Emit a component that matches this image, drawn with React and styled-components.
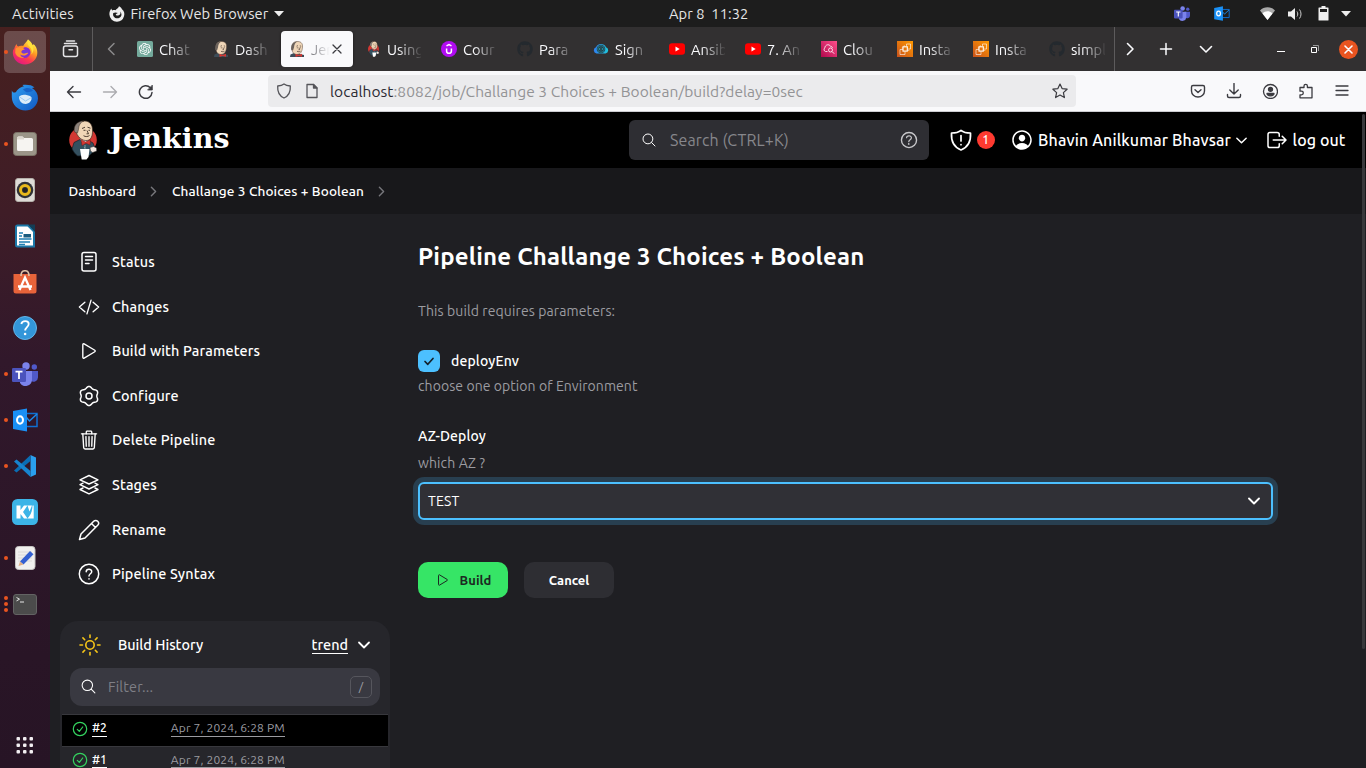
import React from 'react';
import styled, { createGlobalStyle, css } from 'styled-components';
import {
  IoSearchOutline, IoChevronForwardOutline, IoTrashOutline,
  IoHelpCircleOutline, IoPersonCircleOutline, IoPlayOutline, IoLogOutOutline, IoCodeSlashOutline,
} from 'react-icons/io5';
import { FaGithub } from 'react-icons/fa';
import { SiOpenai } from 'react-icons/si';

const Global = createGlobalStyle`
  *, *::before, *::after { box-sizing: border-box; }
  html, body { margin: 0; background: #1f1f23; overflow: hidden; }
  body { font-family: Ubuntu, "Noto Sans", "Open Sans", sans-serif; font-size: 14px; color: #fff; }
  svg { display: block; flex: none; }
`;

/* ---------- text ---------- */
const T = styled.span`
  white-space: pre;
  display: inline-block;
  font-size: ${p => p.$size || 14}px;
  font-weight: ${p => p.$weight || 400};
  color: ${p => p.$color || 'inherit'};
  letter-spacing: ${p => p.$track || 0}px;
  line-height: 20px;
`;

/* ---------- shell ---------- */
const Screen = styled.div`
  width: 1366px; height: 768px; overflow: hidden;
  display: flex; flex-direction: column;
`;
const TopBar = styled.header`
  height: 27px; flex: none; background: #1d1d1d; color: #e6e6e6;
  display: grid; grid-template-columns: 669px auto 1fr; align-items: center;
`;
const TopLeft = styled.div`display: flex; align-items: center; padding-left: 12px; height: 27px;`;
const TopApp = styled.div`display: flex; align-items: center; margin-left: 35px; gap: 5.500px;`;
const TopRight = styled.div`display: flex; align-items: center; justify-content: flex-end; padding-right: 15px;`;
const Gap = styled.span`width: ${p => p.$w}px; flex: none;`;
const Desktop = styled.div`display: flex; flex: 1; min-height: 0;`;
const Dock = styled.nav`
  width: 50px; flex: none; display: flex; flex-direction: column; align-items: center;
  padding-top: 2px;
  background: linear-gradient(180deg, #47201f 0%, #3f1d27 25%, #31182b 45%, #291526 85%, #271425 100%);
`;
const DockItem = styled.div`
  width: 50px; height: 46px; flex: none; position: relative;
  display: flex; align-items: center; justify-content: center;
  & > svg { position: relative; }
  ${p => p.$active && css`
    &::before { content: ''; position: absolute; inset: 2px 4px; border-radius: 5px; background: rgba(255,255,255,0.2); }
  `}
`;
const Dots = styled.span`
  position: absolute; left: 4px; top: 0; height: 46px; width: 4px;
  display: flex; flex-direction: column; justify-content: center; gap: 2px;
  i { width: 4px; height: 4px; border-radius: 2px; background: #e95420; }
`;
const DockApps = styled.div`margin-top: auto; padding-bottom: 14px;`;
const Browser = styled.main`flex: 1; min-width: 0; display: flex; flex-direction: column;`;

/* ---------- tab strip ---------- */
const TabStrip = styled.div`height: 44px; flex: none; background: #323031; display: flex; align-items: center; color: #fbfbfe;`;
const StripCell = styled.div`
  width: ${p => p.$w}px; height: 44px; flex: none; display: flex; align-items: center; justify-content: center;
  border-right: ${p => (p.$rule ? '1px solid #5d5b5c' : 'none')};
`;
const Tabs = styled.div`display: flex; gap: 4px; width: 985px; overflow: hidden; flex: none;`;
const Tab = styled.div`
  width: 72px; height: 36px; padding: 0 8px; border-radius: 4px; flex: none;
  display: flex; align-items: center;
  ${p => p.$active && css`background: #f9f9fb; color: #77777c; box-shadow: 0 0 3px rgba(0,0,0,.5);`}
`;
const TabText = styled.div`
  margin-left: 6px; width: ${p => (p.$active ? 19 : 34)}px; flex: none; padding: 1px 0 0 0; white-space: nowrap; overflow: hidden;
  mask-image: linear-gradient(90deg, #000 ${p => (p.$active ? 0 : 30)}%, transparent ${p => (p.$active ? 100 : 105)}%);
`;
const WindowBtns = styled.div`display: flex; align-items: center; margin-left: auto; padding-right: 8.500px;`;
const Close = styled.span`
  width: 19px; height: 19px; border-radius: 50%; background: #e95420; margin-left: 20px;
  display: flex; align-items: center; justify-content: center;
`;

/* ---------- address bar ---------- */
const NavBar = styled.div`
  height: 41px; flex: none; background: #f9f9fb; border-bottom: 1px solid #ccccd0; color: #3b3b40;
  display: flex; align-items: center; padding: 0 14px 0 16px;
`;
const UrlBar = styled.div`
  width: 808px; height: 32px; border-radius: 4px; background: #ebebed;
  display: flex; align-items: center; padding: 0 8px; color: #939395; flex: none;
  b { font-weight: 400; color: #2b2a33; }
  & > ${T} { padding-top: 2px; }
`;
const NavLeft = styled.div`display: flex; width: 202px; gap: 20px; align-items: center; padding-top: 1px; flex: none;`;
const NavTools = styled.div`display: flex; align-items: center; gap: 20px; margin-left: auto; padding-right: 2px;`;
const Push = styled.span`margin-left: auto;`;

/* ---------- jenkins ---------- */
const Page = styled.div`flex: 1; min-height: 0; background: #1f1f23; position: relative; overflow: hidden;`;
const Scrollbar = styled.i`position: absolute; right: 1px; top: 2px; width: 3px; height: 535px; border-radius: 2px; background: #38383b;`;
const Header = styled.div`height: 56px; background: #000; display: flex; align-items: center; padding: 0 20px 0 19px;`;
const Brand = styled.div`display: flex; align-items: center; gap: 12.500px; font-family: Georgia, "DejaVu Serif", serif; & > span { margin-top: -5px; }`;
const Search = styled.div`
  width: 300px; height: 40px; border-radius: 6px; background: #2e2e33; margin-left: auto;
  display: flex; align-items: center; padding: 0 9px 0 12px;
`;
const Alert = styled.div`display: flex; align-items: center; gap: 4px; margin-left: 20px;`;
const Badge = styled.span`
  width: 18px; height: 18px; border-radius: 9px; background: #fe3a30; font-size: 12px; font-weight: 500; line-height: 18px; text-align: center;
`;
const HeaderLink = styled.div`display: flex; align-items: center; margin-left: ${p => p.$ml}px;`;
const Crumbs = styled.div`height: 46px; background: #18181b; display: flex; align-items: center; padding-left: 18.500px;`;
const Columns = styled.div`display: flex;`;
const Side = styled.aside`width: 340px; flex: none; padding: 25.800px 0 0 10px;`;
const Task = styled.div`height: 44.6px; display: flex; align-items: center; gap: 12px; padding-left: 18px; & > svg { width: 22px; height: 22px; }`;
const History = styled.section`margin-top: 24.200px; width: 330px; height: 190px; border-radius: 18px; background: #26262b; padding: 1px 2px;`;
const HistoryHead = styled.div`height: 46px; display: flex; align-items: center; padding: 1px 17px 0 17px;`;
const Filter = styled.div`
  margin: 0 8px 8px; height: 38px; border-radius: 12px; background: #393941; display: flex; align-items: center; padding: 0 8px 0 10px;
  & > ${T} { padding-top: 1px; }
`;
const Key = styled.span`
  width: 22px; height: 22px; border: 1px solid #56565d; border-radius: 5px; margin-left: auto;
  font-size: 12px; line-height: 19px; text-align: center; color: #a0a0a6;
`;
const BuildRow = styled.div`
  height: ${p => (p.$first ? 32 : 31)}px; border-top: 1px solid #38383d; background: ${p => (p.$first ? '#000' : 'transparent')};
  display: flex; align-items: center; padding: 0 0 3px 10px;
`;
const Under = styled.span`border-bottom: 1px solid currentColor; color: ${p => p.$color || '#fff'}; height: ${p => p.$h || 17}px; display: inline-flex; align-items: center;`;
const Content = styled.section`padding: 27px 0 0 28px; width: 883px; display: flex; flex-direction: column; align-items: flex-start;`;
const Title = styled.h1`margin: 0; height: 32px; line-height: 32px; font-size: 24px; display: flex; align-items: center;`;
const Line = styled.div`height: 20px; margin-top: ${p => p.$mt}px; display: flex; align-items: center; gap: 11px;`;
const Check = styled.span`width: 22px; height: 22px; border-radius: 6px; background: #4cc0ff; display: flex; align-items: center; justify-content: center;`;
const Select = styled.div`
  width: 855px; height: 38px; margin-top: 9px; border: 2px solid #4cc0ff; border-radius: 6px; background: #303036;
  box-shadow: 0 0 0 5px #283f50; display: flex; align-items: center; justify-content: space-between; padding: 0 10px 0 8px;
`;
const Buttons = styled.div`display: flex; gap: 16px; margin-top: 42px;`;
const Button = styled.div`
  width: 90px; height: 36px; border-radius: 10px; display: flex; align-items: center; justify-content: center; gap: 9px;
  background: ${p => (p.$primary ? '#36e566' : '#2e2e33')}; color: ${p => (p.$primary ? '#1c2a22' : '#fff')};
`;

/* ---------- drawings ---------- */
const S = ({ s = 16, vb = 16, w = 1.3, children, ...p }) => (
  <svg width={s} height={s} viewBox={`0 0 ${vb} ${vb}`} fill="none" stroke="currentColor" strokeWidth={w} strokeLinecap="round" strokeLinejoin="round" {...p}>{children}</svg>
);
const Down = ({ s = 14, w = 1.6 }) => <S s={s} vb={14} w={w}><path d="M2 4.500l5 5 5-5" /></S>;
const Head = () => (
  <svg width="16" height="16" viewBox="0 0 16 16">
    <path d="M1 16l.5-2.500L5 12l6 1 4 1v2z" fill="#3c4c58" />
    <path d="M3 5.500C3 2 5.500.3 9 .5s4.800 2.500 4.500 5.500-.8 6.500-4.500 7.300S3.500 11.500 3 9z" fill="#efd6b8" stroke="#5b4638" strokeWidth=".5" />
    <path d="M2.300 9C1.500 4 3.800.4 8.500.4 6 1.500 5.300 3.500 5 6.500L4 9.500z" fill="#6b625c" />
    <path d="M7.500 5.200l1.500-.5M10.800 4.900l1.400.3M7.800 6.800h1M11 6.800h.8M10 6.500l.6 2.200H9.500M8 10.300c1.500.6 2.500.5 3.500 0" stroke="#4a3a30" strokeWidth=".7" fill="none" />
    <path d="M6.500 12.800l3 1.200 3.500-1.200v3L9.500 15l-3 1z" fill="#d33833" />
  </svg>
);
const Butler = ({ w = 28, h = 40 }) => (
  <svg width={w} height={h} viewBox="0 0 28 40">
    <ellipse cx="14" cy="20" rx="13.800" ry="13" fill="#d33833" />
    <path d="M5 22.500l6-3 8 .5 5 3 2.500 6.500-3 3-3 3-12 .5-3-3-2.500-4z" fill="#34505f" stroke="#172026" strokeWidth=".7" />
    <path d="M10.500 17.500l4 7 5-4-1-3z" fill="#f4f4f4" />
    <path d="M6.500 10C6 4 11 .8 16 1c5 .3 7.500 4 7.500 9 .3 6-1.500 10-5.500 10.500C13 21 8 17 6.500 10z" fill="#f0d6b7" stroke="#3b2c22" strokeWidth=".7" />
    <path d="M5.500 12C4 6 8 .9 15 1 11 2.500 10 5 9.500 9.500L8.500 13z" fill="#8a817b" stroke="#3b2c22" strokeWidth=".5" />
    <path d="M13 8.500l3-1.300M18.500 7.200l3 1M14.500 10.300h2M19.500 10.300h1.500M18 10.500l1.500 3.300h-2M14.500 15.700c2 1.300 4.500 1 6-.2" stroke="#3b2c22" strokeWidth=".9" fill="none" />
    <path d="M12 19.500l4.500 2.400 5-2.200-.5 5.300-4-1.800-4 2.300z" fill="#d33833" stroke="#7b1714" strokeWidth=".5" />
    <path d="M16 25v4M15 27.500h.8" stroke="#9aa" strokeWidth=".8" />
    <path d="M11 29h9.500L19.500 37l-2 2.500h-4.800z" fill="#fff" />
    <path d="M21 27.500l3.500-1 3 1.500.2 3-4 1.500-2.200-1.500z" fill="#f3e7e0" stroke="#333" strokeWidth=".5" />
  </svg>
);
const TinyButler = () => <Butler w={13} h={16} />;
const Gpt = () => (
  <svg width="16" height="16" viewBox="0 0 16 16"><rect width="16" height="16" rx="1.500" fill="#74aa9c" /><g transform="translate(2 2)"><SiOpenai size={12} color="#fff" /></g></svg>
);
const Udemy = () => (
  <svg width="16" height="16" viewBox="0 0 16 16"><circle cx="8" cy="8" r="8" fill="#b10cf2" /><path d="M5.600 7.500v2.400a2.400 2.400 0 004.800 0V7.500M5.500 4.900L8 3.500l2.500 1.400" stroke="#fff" strokeWidth="1.500" fill="none" /></svg>
);
const CloudCode = () => (
  <svg width="16" height="16" viewBox="0 0 16 16">
    <defs><linearGradient id="cc"><stop stopColor="#2f7df0" /><stop offset="1" stopColor="#1fc8dc" /></linearGradient></defs>
    <path d="M3.500 12.500A3.200 3.200 0 013 6.300C4 3.800 6 3 8 3s4.200 1 5 3.300a3.200 3.200 0 01-.5 6.200z" fill="url(#cc)" />
    <circle cx="8" cy="8" r="4.300" fill="#263f49" /><circle cx="8" cy="8" r="3.300" fill="none" stroke="#1a8ba0" strokeWidth=".8" /><path d="M7.300 6.800L6.200 8l1.100 1.200M8.700 6.800L9.800 8 8.700 9.200" stroke="#1fb5c8" strokeWidth=".8" fill="none" />
  </svg>
);
const Tube = () => (
  <svg width="16" height="16" viewBox="0 0 16 16"><rect y="2.300" width="16" height="11.500" rx="3" fill="#f00" /><path d="M6.500 5.600v5L10.700 8z" fill="#fff" /></svg>
);
const CloudWatch = () => (
  <svg width="16" height="16" viewBox="0 0 16 16">
    <defs><linearGradient id="cw" y1="1" x2="1" y2="0"><stop stopColor="#b0084d" /><stop offset="1" stopColor="#ff4f8b" /></linearGradient></defs>
    <rect width="16" height="16" fill="url(#cw)" /><path d="M6.500 10.500H4.500A2 2 0 013.800 7c.2-3.300 4.200-4.500 5.700-1.700 1.200 0 1.800.7 2 1.700" stroke="#fff" strokeWidth=".8" fill="none" /><circle cx="9.500" cy="9" r="2" stroke="#fff" strokeWidth=".8" fill="none" /><path d="M11 10.500l2.200 2.200" stroke="#fff" strokeWidth=".9" />
  </svg>
);
const Ec2 = () => (
  <svg width="16" height="16" viewBox="0 0 16 16">
    <defs><linearGradient id="ec" y1="1" x2="1" y2="0"><stop stopColor="#c8511b" /><stop offset="1" stopColor="#f90" /></linearGradient></defs>
    <rect width="16" height="16" fill="url(#ec)" /><g stroke="#fff" strokeWidth=".6" fill="none"><rect x="6" y="5.800" width="4.300" height="4.300" strokeWidth="1.100" /><path d="M8 10.500v3H3v-5h3M9.500 5V3h4v5h-2.300M7.300 5.500V4.300M4.800 7H6M11 9.300h1.300" /></g>
  </svg>
);
const GitHub = () => <FaGithub size={16} color="#24292e" />;

const icons = {
  firefox: (
    <svg width="26" height="26" viewBox="0 0 26 26">
      <defs>
        <linearGradient id="ff1" x1=".8" y1=".1" x2=".25" y2=".95"><stop stopColor="#fff14a" /><stop offset=".35" stopColor="#ff9a22" /><stop offset=".65" stopColor="#ff3c4e" /><stop offset="1" stopColor="#e31a80" /></linearGradient>
        <radialGradient id="ff2"><stop stopColor="#6b3fd8" /><stop offset="1" stopColor="#8a2ccb" /></radialGradient>
      </defs>
      <path d="M16 .5c3 2 4 4 4.500 5.500l1.200-.8c3 2.500 4.300 7 3.300 11.300C23.500 22 18.500 25.500 13 25.500 6 25.500.8 20 .8 13.500c0-1.500.4-2.700 1-3.700l.2 1.200c.3-2.500 1.300-4.500 2.700-6 .1 1.500.5 2 1.400 2.500 1.500-.8 3.500-1 5-.5C12.500 4 14.500 3.500 16 .5z" fill="url(#ff1)" />
      <path d="M12 8.500c3.500-.8 6.500 1.500 6.500 5a6 6 0 01-6 5.500c-3 0-5-2-5.500-4.500z" fill="url(#ff2)" />
      <path d="M3.500 9.500c3-2 6.500-1.200 9.500.8-1.500.7-3 .8-3.500 2-.5 1 .5 2 1.700 2.300 2 .4 3-1.200 5-.6-1.200 2.500-5.500 3.500-8 1.500.5 1.800 2 3 4 3.200-4 1-8-1.500-9-5z" fill="#ff9430" />
      <path d="M16 .5c-1 3.500-.5 5.500 1.500 7 2.300 2 2.800 5 1.800 8 3.200-3.500 2.700-7.500.2-10.500z" fill="#ffe23a" />
    </svg>
  ),
  bird: (
    <svg width="28" height="28" viewBox="0 0 28 28">
      <defs><linearGradient id="tb" x2="1" y2="1"><stop stopColor="#2fa0f2" /><stop offset="1" stopColor="#1157c2" /></linearGradient></defs>
      <path d="M.8 6.500c1.200 2.500 2.700 2.500 4.200 1.500C7.500 4 11 2.500 13 2.500L11.500 1C16 .5 21 1 23.500 3.500l-2.500.5C25 6.500 27 10 27 14.500 26.500 22 21 26.500 14.500 26.500 7 26.500 1 21 .8 13z" fill="url(#tb)" />
      <path d="M8 13c1.500-2 4-2.700 6.500-2.200s5.500 1 6 3.200-2 6-6 6-6.300-3-6.500-7z" fill="#dcecf9" /><path d="M8 12.500l6.500 4.500 6-3.500" stroke="#9dcbf1" fill="none" />
      <path d="M12 5.500c3-2.300 8-2 10 1-2 1.500-5 2-7 1.500" fill="#1663c8" />
    </svg>
  ),
  files: (
    <svg width="24" height="24" viewBox="0 0 24 24"><rect x=".5" y=".5" width="23" height="23" rx="3" fill="#9b9588" stroke="#7c7568" /><path d="M4 6q0-1.500 1.500-1.500h4L11 6h7.500Q20 6 20 7.500v10q0 1.500-1.500 1.500h-13Q4 19 4 17.500z" fill="#f6f4f1" /><path d="M4 6q0-1.500 1.500-1.500h4L11 6v1.500H4z" fill="#ddd8cf" /></svg>
  ),
  music: (
    <svg width="22" height="24" viewBox="0 0 22 24"><rect x="1.500" y=".5" width="19" height="23" rx="2.500" fill="#dedbd6" stroke="#b4b0aa" /><circle cx="11" cy="12" r="8.300" fill="#303236" /><circle cx="11" cy="12" r="4.500" fill="none" stroke="#e9b91c" strokeWidth="3" /><circle cx="11" cy="12" r="2.300" fill="#222" /></svg>
  ),
  writer: (
    <svg width="22" height="24" viewBox="0 0 22 24"><path d="M3.500 1.500h10.500L20 7.500v15H3.500q-1.500 0-1.500-1.500V3Q2 1.500 3.500 1.500z" fill="#fff" stroke="#1b78a8" strokeWidth="2" /><path d="M14 .5h7v7.500z" fill="#143d55" /><path d="M5 9h4M5 12h3M5 15h12.500M5 18h11M5 20.500h6" stroke="#1f7fb2" strokeWidth="1.300" /><rect x="9.500" y="10" width="7.500" height="3.500" fill="#1b5d80" /></svg>
  ),
  store: (
    <svg width="24" height="24" viewBox="0 0 24 24"><path d="M.5 4h23v17q0 2.500-2.500 2.500H3Q.5 23.500.5 21z" fill="#e8633a" /><path d="M8 6c0-7 8-7 8 0" stroke="#dcc0a6" strokeWidth="1.600" fill="none" /><path d="M6.500 20L12 7.500 17.500 20M5 16.500h14" stroke="#fff" strokeWidth="2.300" fill="none" /></svg>
  ),
  help: (
    <svg width="24" height="24" viewBox="0 0 24 24"><circle cx="12" cy="12" r="11.500" fill="#3396d9" stroke="#62b4e8" /><path d="M8.300 8c.7-3.800 7.400-3.800 7.400 0 0 3-3.500 3.200-3.500 6.500" stroke="#fff" strokeWidth="1.800" fill="none" /><circle cx="12.100" cy="18" r="1.300" fill="#fff" /></svg>
  ),
  teams: (
    <svg width="26" height="24" viewBox="0 0 26 24"><circle cx="14" cy="4" r="3.700" fill="#7b83eb" /><circle cx="22.300" cy="5" r="2.700" fill="#5059c9" /><path d="M17 9h9v6.500a4.500 4.500 0 01-7 3.500z" fill="#5059c9" /><path d="M8 9h12v9a6.500 6.500 0 01-12 3z" fill="#7b83eb" /><rect y="6" width="14" height="14" rx="1.300" fill="#4b53bc" /><path d="M3.500 9.600h7M7 9.600V17" stroke="#fff" strokeWidth="1.800" /></svg>
  ),
  outlook: (
    <svg width="25" height="24" viewBox="0 0 25 24"><path d="M13 5.500h11v13H13" fill="none" stroke="#0f6fd1" strokeWidth="1.500" /><path d="M13.500 9.500l3 3.500L24 6" stroke="#1b8bea" strokeWidth="1.500" fill="none" /><path d="M0 3L14 .5v23L0 21z" fill="#1a90f5" /><ellipse cx="7" cy="12" rx="3" ry="3.700" fill="none" stroke="#fff" strokeWidth="2" /></svg>
  ),
  code: (
    <svg width="24" height="24" viewBox="0 0 24 24"><path d="M17.500 1L23 3.500v17L17.500 23z" fill="#2a9fef" /><path d="M17.500 1v6L3.500 18.500 1 16.500z" fill="#0a6db4" /><path d="M17.500 23v-6L3.500 5.500 1 7.500z" fill="#1784cf" /></svg>
  ),
  kiro: (
    <svg width="26" height="26" viewBox="0 0 26 26"><rect width="26" height="26" rx="5.500" fill="#3cb4e7" /><path d="M4.500 6.500h4v4.500l3.500-4.500h3.500l-4.500 6.500 4.500 6.500H12l-3.500-4.500v4.500h-4zM15.500 6.500H20l-2.500 6zM20.500 6.500h1.200v13H15.500c3-3.500 4.800-6.500 5-13z" fill="#fff" /></svg>
  ),
  editor: (
    <svg width="22" height="24" viewBox="0 0 22 24"><rect x="1.500" y=".5" width="19.500" height="23" rx="3" fill="#f1f0ee" stroke="#c6c4c2" /><path d="M4 6h14M4 9h14M4 12h14M4 15h14" stroke="#dcdad8" /><path d="M6 15.500L16 5l3.500 3.200L9.500 18.500z" fill="#3460d0" /><path d="M6 15.500l3.500 3L4.500 20z" fill="#e0b087" /></svg>
  ),
  terminal: (
    <svg width="24" height="21" viewBox="0 0 24 21"><rect x=".5" y=".5" width="23" height="20" rx="2.500" fill="#4b4b4b" stroke="#636363" /><path d="M3.500 3.500l3 1.700-3 1.700M7 8h4" stroke="#e8e8e8" strokeWidth="1" fill="none" /></svg>
  ),
};
const dock = [['firefox', 1], ['bird', 0], ['files', 1], ['music', 0], ['writer', 0], ['store', 0], ['help', 0], ['teams', 1], ['outlook', 1], ['code', 1], ['kiro', 0], ['editor', 1], ['terminal', 3]];

const tabs = [
  [Gpt, 'Chat'], [Head, 'Dash'], [Head, 'Jen', true], [TinyButler, 'Using'], [Udemy, 'Cour'], [GitHub, 'Para'],
  [CloudCode, 'Sign'], [Tube, 'Ansib'], [Tube, '7. An'], [CloudWatch, 'Clou'], [Ec2, 'Insta'], [Ec2, 'Insta'], [GitHub, 'simpl'],
];

const gearPath = Array.from({ length: 73 }, (_, i) => {
  const a = (i / 72) * Math.PI * 2;
  const r = 8.700 + 0.900 * Math.cos(6 * a + Math.PI);
  return `${i ? 'L' : 'M'}${(11 + r * Math.cos(a)).toFixed(2)} ${(11 + r * Math.sin(a)).toFixed(2)}`;
}).join('') + 'Z';

const tasks = [
  ['Status', 0.15, <S vb={22} w={1.5}><rect x="4" y="1.500" width="14" height="18.500" rx="2" /><path d="M7.500 5.500h7M7.500 9h7M7.500 12.500h3.500" /></S>],
  ['Changes', 0.14, <IoCodeSlashOutline />],
  ['Build with Parameters', 0.12, <IoPlayOutline />],
  ['Configure', 0.08, <S vb={22} w={1.5}><path d={gearPath} /><circle cx="11" cy="11" r="3" /></S>],
  ['Delete Pipeline', 0.16, <IoTrashOutline />],
  ['Stages', 0.14, <S vb={22} w={1.4}><path d="M11 1.500l9 4.300-9 4.200-9-4.200zM5 9.200l-3 1.500L11 15l9-4.300-3-1.500M5 14l-3 1.500 9 4.300 9-4.300-3-1.500" /></S>],
  ['Rename', 0.1, <S vb={22} w={1.5}><path d="M1.500 20.500l1.500-5.500L15.700 2.300a2.700 2.700 0 014 4L7 19zM13.500 4.500l4 4" /></S>],
  ['Pipeline Syntax', 0.16, <S vb={22} w={1.500}><circle cx="11" cy="11" r="9.700" /><path d="M8.200 8.800C8.300 5.300 13.800 5.500 13.700 8.700c0 2-2.700 2.200-2.700 4.300M11 15.800v.3" /></S>],
];

const Tri = () => <svg width="10" height="6" viewBox="0 0 10 6"><path d="M0 0h10L5 5.500z" fill="#eee" /></svg>;

export default function App() {
  return (
    <Screen>
      <Global />
      <TopBar>
        <TopLeft>
          <T $size={14.67} $track={0.18}>Activities</T>
          <TopApp>
            <svg width="16" height="16" viewBox="0 0 16 16"><path d="M10 .3c2 .8 2.500 2 3 3 2.300 1.500 2.800 4.500 2 7A7.500 7.500 0 018 15.700 7.500 7.500 0 01.4 8.500C.3 6 1 4 2.500 2.500c0 1 .3 1.500.8 2C4.300 4 5.500 4 6.500 4.300 7.500 2.500 9.500 2.500 10 .3z" fill="#eee" /><path d="M4.300 7C6 6 7.500 6.500 9 7c-1 .2-1.300 1-2.300 1.300.3 1.500 2 1.500 3.500.7 1.300-.5 1.600-2 .8-3.500 1.800 1.500 2 4 .5 5.600-2 2-5.500 1.500-6.800-.6C4 9.500 3.900 8 4.300 7z" fill="#1d1d1d" /></svg>
            <T $size={14.67}>Firefox Web Browser</T>
            <Tri />
          </TopApp>
        </TopLeft>
        <T $size={14.67} $track={0.05}>Apr 8  11:32</T>
        <TopRight>
          <svg width="16" height="15" viewBox="0 0 26 24">{icons.teams.props.children}</svg><Gap $w={24} />
          <svg width="16" height="15" viewBox="0 0 25 24">{icons.outlook.props.children}</svg><Gap $w={30} />
          <svg width="15" height="13" viewBox="0 0 15 13"><path d="M0 3.500C4-.8 11-.8 15 3.500L7.500 13z" fill="#aaa" /><path d="M2.500 6.400C5 3.500 10 3.500 12.500 6.400L7.500 13z" fill="#fff" /></svg><Gap $w={13} />
          <svg width="15" height="14" viewBox="0 0 15 14"><path d="M0 4.500h3L7 1v12L3 9.500H0z" fill="#eee" /><path d="M9 4.500c1 1.500 1 3.500 0 5M11.500 2.500c2 2.500 2 6.500 0 9" stroke="#ccc" fill="none" /></svg><Gap $w={15} />
          <svg width="11" height="15" viewBox="0 0 11 15"><path d="M3.500 0h4v1.500H10q.5 0 .5.500v12q0 .5-.5.500H1q-.5 0-.5-.5V2q0-.5.500-.5h2.500z" fill="#eee" /><path d="M2 3h7v3H2z" fill="#1d1d1d" /></svg><Gap $w={12} />
          <Tri />
        </TopRight>
      </TopBar>
      <Desktop>
        <Dock>
          {dock.map(([k, n]) => (
            <DockItem key={k} $active={k === 'firefox'}>
              {icons[k]}
              <Dots>{Array.from({ length: n }, (_, i) => <i key={i} />)}</Dots>
            </DockItem>
          ))}
          <DockApps>
            <svg width="18" height="18" viewBox="0 0 18 18">{[0, 1, 2].map(y => [0, 1, 2].map(x => <rect key={`${x}${y}`} x={.5 + x * 6.500} y={1 + y * 6.500} width="3.500" height="3.500" rx="1" fill="#f2eef1" />))}</svg>
          </DockApps>
        </Dock>
        <Browser>
          <TabStrip>
            <StripCell $w={43} $rule><S s={18} vb={18} w={1.500} color="#e6e5e8"><rect x="1.500" y="6" width="14" height="10.500" rx="2" /><path d="M2.500 3.500h12M4.500 1h8M7 9.700h3.500" /></S></StripCell>
            <StripCell $w={36}><S w={1.500} color="#8b8a8b"><path d="M11 2.500L5.500 8l5.500 5.500" /></S></StripCell>
            <Tabs>
              {tabs.map(([Icon, text, active], i) => (
                <Tab key={i} $active={active}>
                  <StripCell $w={16}><Icon /></StripCell>
                  <TabText $active={active}><T $size={14.67}>{text}</T></TabText>
                  {active && <S s={14} vb={14} w={1.300} color="#3b3b40"><path d="M3 3l8 8M11 3l-8 8" /></S>}
                </Tab>
              ))}
            </Tabs>
            <StripCell $w={1} $rule />
            <StripCell $w={30}><S w={1.600}><path d="M5.500 2.500L11 8l-5.500 5.500" /></S></StripCell>
            <StripCell $w={41}><S w={1.500}><path d="M8 2.500v11M2.500 8h11" /></S></StripCell>
            <StripCell $w={40}><S w={1.600}><path d="M2.500 5.500L8 11l5.500-5.500" /></S></StripCell>
            <WindowBtns>
              <svg width="8" height="8" viewBox="0 0 8 8"><path d="M0 6.500h8" stroke="#fff" /></svg>
              <Gap $w={26} />
              <svg width="8" height="8" viewBox="0 0 8 8"><path d="M.5 2.500h5v5h-5z" stroke="#fff" fill="none" /><path d="M2 .5h5.500V6" stroke="#999" fill="none" /></svg>
              <Close><S s={9} vb={9} w={1.600}><path d="M1 1l7 7M8 1L1 8" /></S></Close>
            </WindowBtns>
          </TabStrip>
          <NavBar>
            <NavLeft>
              <S w={1.400}><path d="M14.500 8h-13M7 2.500L1.500 8 7 13.500" /></S>
              <S w={1.400} opacity=".4"><path d="M1.500 8h13M9 2.500L14.500 8 9 13.500" /></S>
              <S w={1.500}><path d="M14 8.500A6.300 6.300 0 1112.300 3.700" /><path d="M14.300 1.500V6H10z" fill="currentColor" strokeWidth=".8" /></S>
            </NavLeft>
            <UrlBar>
              <S w={1.300}><path d="M8 1C6 2.500 4 2.800 1.700 3 1.300 9 3.500 13 8 15c4.500-2 6.700-6 6.300-12C12 2.800 10 2.500 8 1z" stroke="#55555a" /></S><Gap $w={12} />
              <S w={1.300}><path d="M3 1.500h6.500L13 5v9.500H3z" stroke="#55555a" /><path d="M9.500 1.500V5H13z" stroke="#55555a" fill="#55555a" /></S><Gap $w={10} />
              <T $size={15.5} $track={0.045}><b>localhost</b>:8082/job/Challange 3 Choices + Boolean/build?delay=0sec</T>
              <Push><S w={1.200} color="#3b3b40"><path d="M8 1l2.100 4.600 5 .6-3.700 3.400 1 5L8 12.100l-4.400 2.500 1-5L.9 6.200l5-.6z" /></S></Push>
            </UrlBar>
            <NavTools>
              <S w={1.400}><path d="M3 2.500h10q1.500 0 1.500 1.500v4a6.500 6 0 01-13 0V4Q1.500 2.500 3 2.500zM5 6.700l3 2.800 3-2.800" /></S>
              <S w={1.400}><path d="M8 .5V11M3.800 7L8 11l4.200-4M1.500 11.500V13q0 1.500 1.500 1.500h10q1.500 0 1.500-1.500v-1.500" /></S>
              <S w={1.300}><circle cx="8.500" cy="8.500" r="7" /><circle cx="8.500" cy="6.300" r="2" fill="currentColor" /><path d="M5 10.300h7q0 2.500-3.500 2.500T5 10.300z" fill="currentColor" /></S>
              <S w={1.300}><path d="M2 4.500h4V3a1.700 1.700 0 013.400 0v1.500H14v10.300H2v-3h1.500a1.800 1.800 0 000-3.600H2z" /></S>
              <S w={1.300}><path d="M2 3h12M2 7.500h12M2 12h12" /></S>
            </NavTools>
          </NavBar>
          <Page>
            <Header>
              <Brand><Butler /><T $size={28.5} $weight={700} $track={0.05}>Jenkins</T></Brand>
              <Search>
                <IoSearchOutline size={16} /><Gap $w={13.5} />
                <T $size={16} $color="#87878c" $track={0.1}>Search (CTRL+K)</T>
                <Push><IoHelpCircleOutline size={22} color="#c8c8cb" /></Push>
              </Search>
              <Alert><S s={24} vb={24} w={1.700}><path d="M12 2.300C9.500 4.300 6 5 2.500 5 2 13 4.500 19 12 22c7.500-3 10-9 9.500-17-3.500 0-7-.7-9.500-2.700zM12 7.500v5.500M12 16.500v.2" /></S><Badge>1</Badge></Alert>
              <HeaderLink $ml={15}><IoPersonCircleOutline size={24} /><Gap $w={4.5} /><T $size={16} $weight={500} $track={0.14}>Bhavin Anilkumar Bhavsar</T><Gap $w={4} /><Down s={13} /></HeaderLink>
              <HeaderLink $ml={17}><IoLogOutOutline size={24} /><Gap $w={3.5} /><T $size={16} $weight={500} $track={0.1}>log out</T><Gap $w={0.5} /></HeaderLink>
            </Header>
            <Crumbs>
              <T $size={13.6} $weight={500}>Dashboard</T><Gap $w={10} /><IoChevronForwardOutline size={15} color="#77777c" /><Gap $w={11} />
              <T $size={13.6} $weight={500} $track={0.1}>Challange 3 Choices + Boolean</T><Gap $w={10} /><IoChevronForwardOutline size={15} color="#77777c" />
            </Crumbs>
            <Columns>
              <Side>
                {tasks.map(([name, track, icon]) => <Task key={name}>{icon}<T $size={14.4} $weight={500} $track={track}>{name}</T></Task>)}
                <History>
                  <HistoryHead>
                    <svg width="22" height="22" viewBox="0 0 22 22" stroke="#f5c518" strokeWidth="1.600" fill="none" strokeLinecap="round"><circle cx="11" cy="11" r="4.200" />{[0, 45, 90, 135, 180, 225, 270, 315].map(a => <path key={a} d="M11 1v2.500" transform={`rotate(${a} 11 11)`} />)}</svg>
                    <Gap $w={17} /><T $size={14.4} $weight={500}>Build History</T>
                    <Push><Under><T $size={14.4} $weight={500}>trend</T></Under></Push><Gap $w={9} />
                    <Down w={1.8} />
                  </HistoryHead>
                  <Filter><IoSearchOutline size={17} /><Gap $w={11} /><T $size={14.4} $color="#7f7f86" $track={0.15}>Filter...</T><Key>/</Key></Filter>
                  {['#2', '#1'].map((n, i) => (
                    <BuildRow key={n} $first={i === 0}>
                      <S s={16} vb={16} w={1.200} color="#34d35f"><circle cx="8" cy="8" r="6.700" /><path d="M5.300 8.300l2 2L10.700 6" /></S><Gap $w={4} />
                      <Under $h={16}><T $size={12} $weight={500}>{n}</T></Under><Gap $w={64} />
                      <Under $h={16} $color="#9b9ba0"><T $size={12} $track={0.15}>Apr 7, 2024, 6:28 PM</T></Under>
                    </BuildRow>
                  ))}
                </History>
              </Side>
              <Content>
                <Title><T $size={24} $weight={700} $track={0.18}>Pipeline Challange 3 Choices + Boolean</T></Title>
                <Line $mt={28}><T $color="#9c9ca1" $track={0.11}>This build requires parameters:</T></Line>
                <Line $mt={30}><Check><S s={14} vb={14} w={1.700} color="#14212b"><path d="M3 7.500l2.800 2.800L11 4.500" /></S></Check><T $weight={500} $track={0.14}>deployEnv</T></Line>
                <Line $mt={5}><T $color="#9c9ca1" $track={0.07}>choose one option of Environment</T></Line>
                <Line $mt={30}><T $weight={500} $track={0.12}>AZ-Deploy</T></Line>
                <Line $mt={7}><T $color="#9c9ca1" $track={0.11}>which AZ ?</T></Line>
                <Select><T $track={0.15}>TEST</T><Down w={1.900} /></Select>
                <Buttons>
                  <Button $primary><IoPlayOutline size={16} /><T $size={13} $weight={600} $track={0.08}>Build</T></Button>
                  <Button><T $size={13} $weight={600}>Cancel</T></Button>
                </Buttons>
              </Content>
            </Columns>
            <Scrollbar />
          </Page>
        </Browser>
      </Desktop>
    </Screen>
  );
}
